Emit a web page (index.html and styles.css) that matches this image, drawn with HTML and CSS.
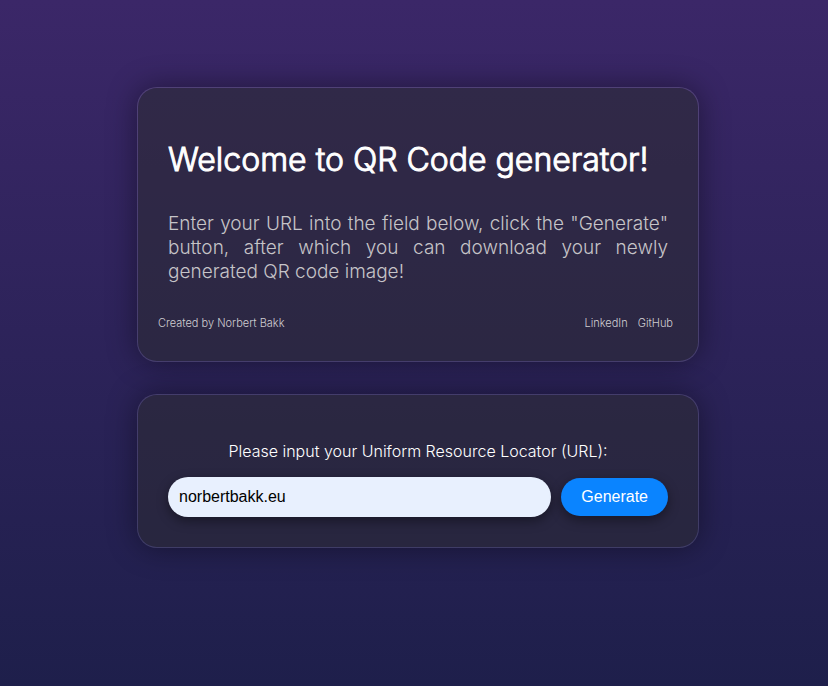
FILE: index.html
```html
<!DOCTYPE html>
<html lang="en">
<head>
<meta charset="utf-8">
<meta name="viewport" content="width=device-width, initial-scale=1">
<title>QR Code generator</title>
<link rel="stylesheet" href="styles.css">
</head>
<body>
<main class="page">
  <section class="card intro">
    <h1 class="title">Welcome to QR Code generator!</h1>
    <p class="lead">Enter your URL into the field below, click the "Generate" button, after which you can download your newly generated QR code image!</p>
    <footer class="credits">
      <span>Created by Norbert Bakk</span>
      <nav class="links">
        <a href="#linkedin">LinkedIn</a>
        <a href="#github">GitHub</a>
      </nav>
    </footer>
  </section>
  <form class="card generator">
    <label class="label" for="url">Please input your Uniform Resource Locator (URL):</label>
    <div class="row">
      <input class="field" id="url" type="text" value="norbertbakk.eu">
      <button class="button" type="button">Generate</button>
    </div>
  </form>
</main>
</body>
</html>
```
FILE: styles.css
```css
* {
  box-sizing: border-box;
}

body {
  margin: 0;
  padding-left: 8px;
  min-height: 100vh;
  background: linear-gradient(#3b2768, #1e1f4b);
  color: #fff;
  font-family: Inter, sans-serif;
  font-weight: 300;
}

.page {
  display: flex;
  flex-direction: column;
  gap: 32px;
  max-width: 562px;
  margin: 0 auto;
  padding: 87px 0 40px;
}

.card {
  border: 1px solid rgba(255, 255, 255, 0.125);
  border-radius: 20px;
  background: rgba(43, 44, 50, 0.55);
  background-clip: padding-box;
  box-shadow: 0 0 30px rgba(0, 0, 0, 0.4);
}

.intro {
  padding: 52px 20px 30px;
}

.title {
  margin: 0 10px 32px;
  font-size: 32px;
  line-height: 40px;
  font-weight: 300;
  -webkit-text-stroke: 1px #fff;
}

.lead {
  margin: 0 10px 31px;
  color: #c6c4c8;
  font-size: 19px;
  line-height: 24px;
  text-align: justify;
}

.credits {
  display: flex;
  justify-content: space-between;
  padding-right: 5px;
  color: #d0ced2;
  font-size: 11px;
  line-height: 16px;
}

.links {
  display: flex;
  gap: 10px;
}

.links a {
  color: inherit;
  text-decoration: none;
}

.generator {
  padding: 46px 30px 30px;
}

.label {
  display: block;
  margin-bottom: 16px;
  font-size: 16px;
  line-height: 20px;
  text-align: center;
}

.row {
  display: flex;
  align-items: center;
  gap: 10px;
}

.field {
  flex: 1;
  min-width: 0;
  height: 40px;
  padding: 0 11px;
  border: 0;
  border-radius: 20px;
  background: #e8f0fe;
  color: #000;
  font: 16px "Liberation Sans", sans-serif;
  box-shadow: 0 4px 12px rgba(0, 0, 0, 0.4);
}

.button {
  height: 38px;
  padding: 0 20px;
  border: 0;
  border-radius: 19px;
  background: #0a84ff;
  color: #fff;
  font: 16px "Liberation Sans", sans-serif;
  box-shadow: 0 4px 12px rgba(0, 0, 0, 0.4);
}
```
